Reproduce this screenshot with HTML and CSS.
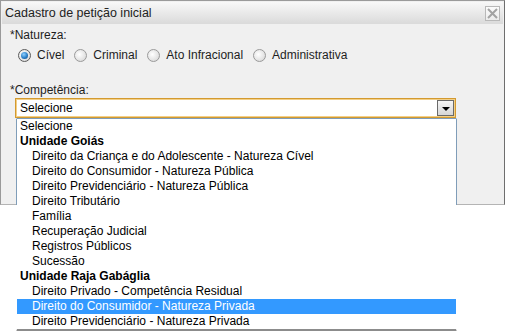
FILE: index.html
```html
<!DOCTYPE html>
<html lang="pt-BR">

<head>
    <meta charset="UTF-8">
    <title>Cadastro de petição inicial</title>
    <link rel="stylesheet" href="styles.css">
</head>

<body>
    <div class="dialog">
        <div class="titlebar">
            <span class="title">Cadastro de petição inicial</span>
            <span class="close">
                <svg width="13" height="13" viewBox="0 0 13 13">
                    <path d="M2 2 L11 11 M11 2 L2 11" stroke="#a3a3a3" stroke-width="2" fill="none" />
                </svg>
            </span>
        </div>

        <div class="content">
            <div class="field-label">*Natureza:</div>
            <div class="radios">
                <label class="radio"><span class="dot checked"></span>Cível</label>
                <label class="radio"><span class="dot"></span>Criminal</label>
                <label class="radio"><span class="dot"></span>Ato Infracional</label>
                <label class="radio"><span class="dot"></span>Administrativa</label>
            </div>

            <div class="field-label comp">*Competência:</div>
            <div class="select">
                <span class="select-value">Selecione</span>
                <span class="select-btn"><span class="arrow"></span></span>

                <ul class="options">
                    <li class="group">Selecione</li>
                    <li class="group bold">Unidade Goiás</li>
                    <li>Direito da Criança e do Adolescente - Natureza Cível</li>
                    <li>Direito do Consumidor - Natureza Pública</li>
                    <li>Direito Previdenciário - Natureza Pública</li>
                    <li>Direito Tributário</li>
                    <li>Família</li>
                    <li>Recuperação Judicial</li>
                    <li>Registros Públicos</li>
                    <li>Sucessão</li>
                    <li class="group bold">Unidade Raja Gabáglia</li>
                    <li>Direito Privado - Competência Residual</li>
                    <li class="selected">Direito do Consumidor - Natureza Privada</li>
                    <li>Direito Previdenciário - Natureza Privada</li>
                </ul>
            </div>
        </div>
    </div>
</body>

</html>
```

FILE: styles.css
```css
html,
body {
    height: 331px;
}

body {
    margin: 0;
    background-color: white;
    font-family: "Liberation Sans", Arial, sans-serif;
    font-size: 12px;
    color: #1e1e1e;
}

.dialog {
    box-sizing: border-box;
    width: 505px;
    height: 205px;
    background-color: #f0f0f0;
    border: 1px solid #9a9a9a;
    border-right-color: #6e6e6e;
    border-bottom-color: #b4b4b4;
}

.titlebar {
    display: flex;
    align-items: center;
    justify-content: space-between;
    height: 22px;
    margin: 1px 1px 0 1px;
    padding: 0 3px 0 3px;
    background: linear-gradient(#f8f8f8, #dadada);
}

.title {
    font-size: 12.5px;
    color: #222;
}

.close {
    display: flex;
    align-items: center;
    justify-content: center;
    width: 13px;
    height: 13px;
    margin-top: 1px;
    border: 1px solid #b8b8b8;
    background: linear-gradient(#fbfbfb, #ececec);
}

.content {
    padding: 4px 9px 0 9px;
}

.field-label {
    line-height: 15px;
}

.comp {
    margin-top: 20px;
}

.radios {
    display: flex;
    gap: 10px;
    margin: 5px 0 0 8px;
    line-height: 15px;
}

.radio {
    display: flex;
    align-items: center;
    gap: 6px;
}

.dot {
    box-sizing: border-box;
    width: 13px;
    height: 13px;
    border-radius: 50%;
    border: 1px solid #9a9a9a;
    background: radial-gradient(circle at 40% 40%, #ffffff, #e4e4e4 60%, #cfcfcf);
    position: relative;
}

.dot.checked {
    border-color: #5b5b5b;
}

.dot.checked::after {
    content: "";
    position: absolute;
    left: 2px;
    top: 2px;
    width: 7px;
    height: 7px;
    border-radius: 50%;
    background: radial-gradient(circle at 40% 35%, #8fd0ff, #2a7fc8 55%, #0e3f78);
}

.select {
    position: relative;
    box-sizing: border-box;
    display: flex;
    align-items: stretch;
    width: 441px;
    height: 20px;
    margin-left: 5px;
    padding: 1px 1px 1px 0;
    background-color: white;
    border: 1px solid #d39a30;
    box-shadow: inset 0 0 0 1px #f3cf86;
}

.select-value {
    flex: 1;
    padding-left: 4px;
    line-height: 17px;
    color: #000;
}

.select-btn {
    box-sizing: border-box;
    display: flex;
    align-items: center;
    justify-content: center;
    width: 17px;
    border: 1px solid #6a6a6a;
    background: linear-gradient(#f6f6f6, #d6d6d6);
}

.arrow {
    width: 0;
    height: 0;
    margin-top: 2px;
    border-left: 4px solid transparent;
    border-right: 4px solid transparent;
    border-top: 4px solid #000;
}

.options {
    position: absolute;
    z-index: 5;
    top: 19px;
    left: 0;
    width: 439px;
    margin: 0;
    padding: 0;
    list-style: none;
    background-color: white;
    border: 1px solid #7f9db9;
    border-left-color: white;
    border-right-color: white;
    border-bottom: 3px solid #8c8c8c;
    color: #000;
}

/* the side lines only show where the list lies over the dialog */
.options::before {
    content: "";
    position: absolute;
    top: 0;
    left: -1px;
    right: -1px;
    height: 86px;
    border-left: 1px solid #7f9db9;
    border-right: 1px solid #7f9db9;
}

.options li {
    height: 15px;
    line-height: 15px;
    padding-left: 15px;
    white-space: nowrap;
}

.options li.group {
    padding-left: 3px;
}

.options li.bold {
    font-weight: bold;
}

.options li.selected {
    background-color: #3399ff;
    color: white;
}
```
